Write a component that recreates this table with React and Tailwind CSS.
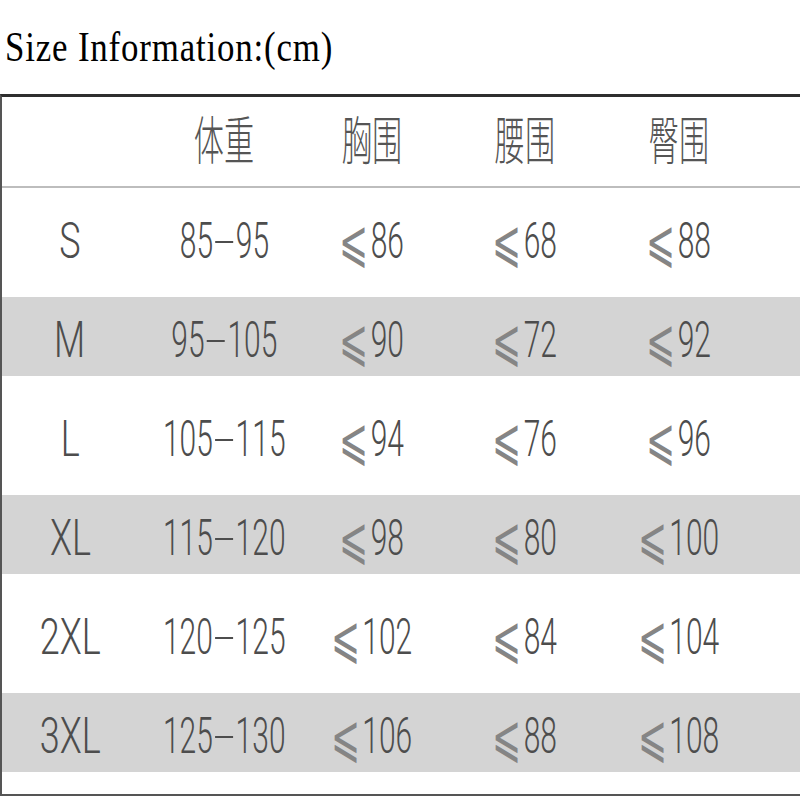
const COLS = "grid grid-cols-[136px_172px_124px_182px_126px] items-center";

const rows = [
  { size: "S", weight: ["85", "95"], chest: "86", waist: "68", hip: "88" },
  { size: "M", weight: ["95", "105"], chest: "90", waist: "72", hip: "92", shade: true },
  { size: "L", weight: ["105", "115"], chest: "94", waist: "76", hip: "96" },
  { size: "XL", weight: ["115", "120"], chest: "98", waist: "80", hip: "100", shade: true },
  { size: "2XL", weight: ["120", "125"], chest: "102", waist: "84", hip: "104" },
  { size: "3XL", weight: ["125", "130"], chest: "106", waist: "88", hip: "108", shade: true },
];

const numFont = { fontFamily: "Roboto, 'Liberation Sans', 'DejaVu Sans', sans-serif" };

function Cell({ children, wide }) {
  return (
    <div className="flex justify-center">
      <span
        className={`inline-flex items-center whitespace-nowrap text-[50px] leading-none font-light text-[#4d4d4d] ${
          wide ? "scale-x-[0.72]" : "scale-x-[0.6]"
        }`}
        style={numFont}
      >
        {children}
      </span>
    </div>
  );
}

function Range({ from, to }) {
  return (
    <Cell>
      {from}
      <span className="inline-block w-[30px] h-[2px] bg-[#4d4d4d] mx-[4px] mt-[2px]" />
      {to}
    </Cell>
  );
}

function Le({ children }) {
  return (
    <Cell>
      <span className="inline-block text-[58px] leading-none font-extralight text-[#858585] mr-[3px] -translate-y-[5px] font-['Noto_Sans_CJK_JP','DejaVu_Sans',sans-serif]">
        ⩽
      </span>
      {children}
    </Cell>
  );
}

function Head({ children }) {
  return (
    <div className="flex justify-center">
      <span className="inline-block text-[52px] leading-none font-light text-[#555] scale-x-[0.58] -mt-[8px] font-['Noto_Sans_CJK_SC',sans-serif]">
        {children}
      </span>
    </div>
  );
}

export default function App() {
  return (
    <div className="w-[800px] h-[800px] bg-white overflow-hidden">
      <div className="h-[94px] pt-[26px] pl-[5px]">
        <span className="inline-block origin-left scale-x-[0.83] text-[42px] leading-none text-black font-['Liberation_Serif',serif] tracking-[1px] whitespace-nowrap">
          Size Information:(cm)
        </span>
      </div>
      <div className="border-t-[3px] border-t-[#2e2e2e] border-l-2 border-l-[#555] border-b-2 border-b-[#555]">
        <div className={`${COLS} h-[91px] border-b-2 border-b-[#bdbdbd]`}>
          <div />
          <Head>体重</Head>
          <Head>胸围</Head>
          <Head>腰围</Head>
          <Head>臀围</Head>
        </div>
        {rows.map((r) => (
          <div key={r.size} className="h-[99px] py-[10px]">
            <div className={`${COLS} h-full pt-[6px] ${r.shade ? "bg-[#d4d4d4]" : ""}`}>
              <Cell wide>{r.size}</Cell>
              <Range from={r.weight[0]} to={r.weight[1]} />
              <Le>{r.chest}</Le>
              <Le>{r.waist}</Le>
              <Le>{r.hip}</Le>
            </div>
          </div>
        ))}
        <div className="h-[12px]" />
      </div>
    </div>
  );
}
